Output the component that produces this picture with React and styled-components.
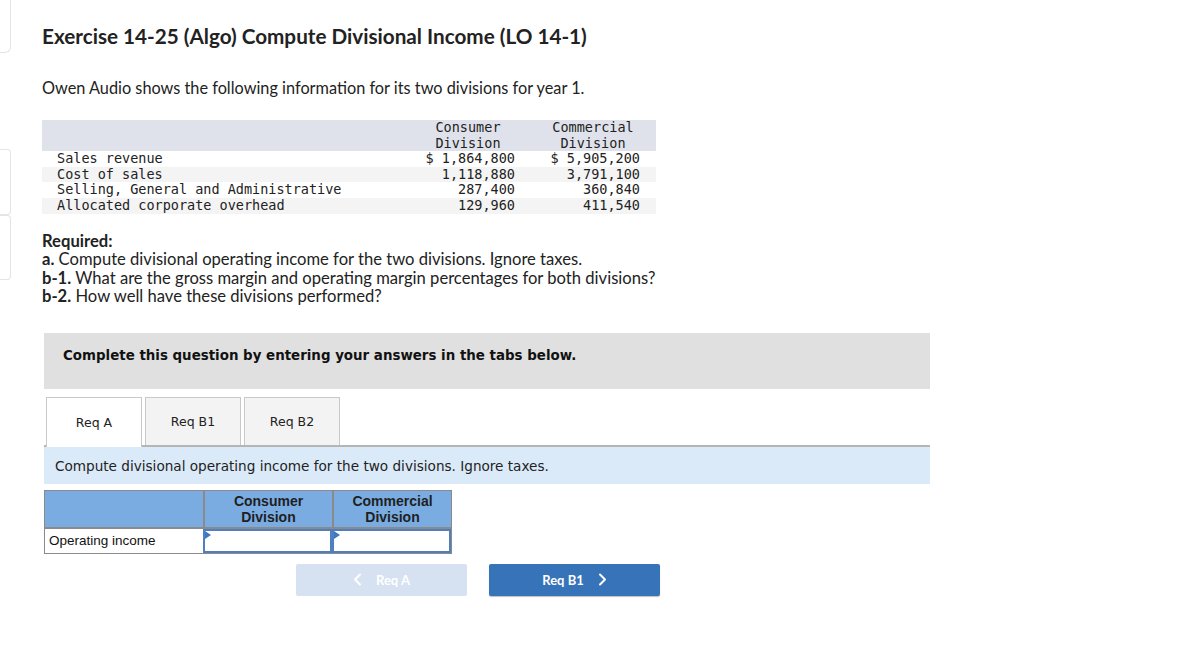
import React from "react";
import styled, { createGlobalStyle } from "styled-components";

const GlobalStyle = createGlobalStyle`
  html, body {
    margin: 0;
    padding: 0;
    background: #ffffff;
    color: #222222;
    font-family: "Lato", "Liberation Sans", sans-serif;
  }
`;

const Page = styled.div`
  display: flex;
  width: 1200px;
  height: 648px;
  overflow: hidden;
`;

const Rail = styled.div`
  width: 11px;
  flex-shrink: 0;
  display: flex;
  flex-direction: column;
`;

const RailBox = styled.div`
  height: ${(p) => p.$h}px;
  margin-top: ${(p) => p.$mt || 0}px;
  border: 1px solid #e4e4e4;
  border-left: none;
  border-top: ${(p) => (p.$first ? "none" : "1px solid #e4e4e4")};
  border-radius: ${(p) => (p.$first ? "0 0 6px 0" : "0 4px 4px 0")};
`;

const Content = styled.div`
  margin-left: 31px;
  width: 888px;
  display: flex;
  flex-direction: column;
`;

const Title = styled.h1`
  margin: 22px 0 0;
  font-size: 20.7px;
  font-weight: 700;
  line-height: 28px;
  color: #222222;
`;

const Intro = styled.p`
  margin: 28px 0 0;
  font-size: 16.3px;
  line-height: 20px;
`;

const DataTable = styled.div`
  margin-top: 22px;
  width: 614px;
  display: grid;
  grid-template-columns: 374px 100px 140px;
  font-family: "DejaVu Sans Mono", "Liberation Mono", monospace;
  font-size: 13.5px;
  line-height: 15.6px;
  color: #222222;
`;

const HeadCell = styled.div`
  background: #dfe2eb;
  text-align: center;
  padding-left: ${(p) => p.$pl || 0}px;
  white-space: pre;
`;

const Cell = styled.div`
  background: ${(p) => (p.$alt ? "#f4f4f4" : "#ffffff")};
  text-align: ${(p) => (p.$num ? "right" : "left")};
  padding: ${(p) => (p.$num ? `0 ${p.$pr}px 0 0` : "0 0 0 15px")};
  white-space: pre;
`;

const Required = styled.div`
  margin-top: 18px;
  font-size: 16.6px;
  line-height: 18.5px;

  b {
    font-weight: 700;
  }
`;

const Notice = styled.div`
  margin-top: 27px;
  margin-left: 2px;
  height: 56px;
  box-sizing: border-box;
  padding: 14px 0 0 19px;
  background: #e0e0e0;
  font-family: "DejaVu Sans", Verdana, sans-serif;
  font-weight: 700;
  font-size: 13.4px;
  line-height: 18px;
  color: #111111;
`;

const TabBar = styled.div`
  margin-top: 8px;
  margin-left: 2px;
  display: flex;
  gap: 3px;
  padding-left: 2px;
  border-bottom: 2px solid #b5b5b5;
`;

const Tab = styled.div`
  width: 96px;
  box-sizing: border-box;
  display: flex;
  align-items: center;
  justify-content: center;
  border: 1px solid #c9c9c9;
  border-bottom: none;
  background: ${(p) => (p.$active ? "#ffffff" : "#f3f3f3")};
  margin-bottom: ${(p) => (p.$active ? "-2px" : "0")};
  height: ${(p) => (p.$active ? "50px" : "48px")};
  font-family: "DejaVu Sans", Verdana, sans-serif;
  font-size: 12.5px;
  color: #222222;
`;

const InfoBar = styled.div`
  margin-left: 2px;
  height: 37px;
  box-sizing: border-box;
  padding: 10px 0 0 11px;
  background: #dbeaf8;
  font-family: "DejaVu Sans", Verdana, sans-serif;
  font-size: 13.6px;
  line-height: 18px;
  color: #222222;
`;

const Answer = styled.div`
  margin: 6px 0 0 2px;
  width: 408px;
  display: grid;
  grid-template-columns: 158px 129px 119px;
  grid-template-rows: 38px 24px;
  border: 1px solid #8a8a8a;
  box-sizing: border-box;
  font-family: "Liberation Sans", Arial, sans-serif;
  font-size: 14px;
`;

const AnsHead = styled.div`
  background: #7aace2;
  border-left: ${(p) => (p.$first ? "none" : "2px solid #8a8a8a")};
  border-bottom: 2px solid #8a8a8a;
  display: flex;
  align-items: center;
  justify-content: center;
  text-align: center;
  font-weight: 700;
  line-height: 16px;
  color: #1f1f1f;
`;

const AnsLabel = styled.div`
  display: flex;
  align-items: center;
  padding-left: 4px;
  font-size: 13.5px;
  color: #111111;
`;

const AnsInput = styled.div`
  position: relative;
  border: 2px solid #4f7fbf;
  background: #ffffff;

  &::before {
    content: "";
    position: absolute;
    left: 0;
    top: 0;
    border-top: 4px solid transparent;
    border-bottom: 4px solid transparent;
    border-left: 6px solid #3d78c4;
  }
`;

const NavRow = styled.div`
  margin-top: 10px;
  padding-left: 254px;
  display: flex;
  gap: 22px;
`;

const NavButton = styled.div`
  width: 171px;
  height: 32px;
  border-radius: 2px;
  display: flex;
  align-items: center;
  justify-content: center;
  gap: 14px;
  background: ${(p) => (p.$disabled ? "#d6e2f1" : "#3673b9")};
  color: #ffffff;
  font-size: 13px;
  font-weight: 700;
  box-shadow: ${(p) => (p.$disabled ? "none" : "0 1px 1px rgba(0,0,0,0.25)")};
`;

const Chevron = ({ dir }) => (
  <svg width="9" height="13" viewBox="0 0 9 13" fill="none">
    <path
      d={dir === "left" ? "M7 1.5 L2 6.5 L7 11.5" : "M2 1.5 L7 6.5 L2 11.5"}
      stroke="#ffffff"
      strokeWidth="2"
      strokeLinecap="round"
      strokeLinejoin="round"
    />
  </svg>
);

const rows = [
  ["Sales revenue", "$ 1,864,800", "$ 5,905,200"],
  ["Cost of sales", "1,118,880", "3,791,100"],
  ["Selling, General and Administrative", "287,400", "360,840"],
  ["Allocated corporate overhead", "129,960", "411,540"],
];

export default function App() {
  return (
    <>
      <GlobalStyle />
      <Page>
        <Rail>
          <RailBox $first $h={52} />
          <RailBox $mt={96} $h={64} />
          <RailBox $h={63} />
        </Rail>
        <Content>
          <Title>Exercise 14-25 (Algo) Compute Divisional Income (LO 14-1)</Title>
          <Intro>Owen Audio shows the following information for its two divisions for year 1.</Intro>

          <DataTable>
            <HeadCell />
            <HeadCell $pl={4}>{"Consumer\nDivision"}</HeadCell>
            <HeadCell $pl={14}>{"Commercial\nDivision"}</HeadCell>
            {rows.map((r, i) => (
              <React.Fragment key={r[0]}>
                <Cell $alt={i % 2 === 1}>{r[0]}</Cell>
                <Cell $alt={i % 2 === 1} $num $pr={1}>{r[1]}</Cell>
                <Cell $alt={i % 2 === 1} $num $pr={16}>{r[2]}</Cell>
              </React.Fragment>
            ))}
          </DataTable>

          <Required>
            <b>Required:</b>
            <br />
            <b>a.</b> Compute divisional operating income for the two divisions. Ignore taxes.
            <br />
            <b>b-1.</b> What are the gross margin and operating margin percentages for both divisions?
            <br />
            <b>b-2.</b> How well have these divisions performed?
          </Required>

          <Notice>Complete this question by entering your answers in the tabs below.</Notice>

          <TabBar>
            <Tab $active>Req A</Tab>
            <Tab>Req B1</Tab>
            <Tab>Req B2</Tab>
          </TabBar>

          <InfoBar>Compute divisional operating income for the two divisions. Ignore taxes.</InfoBar>

          <Answer>
            <AnsHead $first />
            <AnsHead>
              Consumer
              <br />
              Division
            </AnsHead>
            <AnsHead>
              Commercial
              <br />
              Division
            </AnsHead>
            <AnsLabel>Operating income</AnsLabel>
            <AnsInput />
            <AnsInput />
          </Answer>

          <NavRow>
            <NavButton $disabled>
              <Chevron dir="left" />
              <span>Req A</span>
            </NavButton>
            <NavButton>
              <span>Req B1</span>
              <Chevron dir="right" />
            </NavButton>
          </NavRow>
        </Content>
      </Page>
    </>
  );
}
